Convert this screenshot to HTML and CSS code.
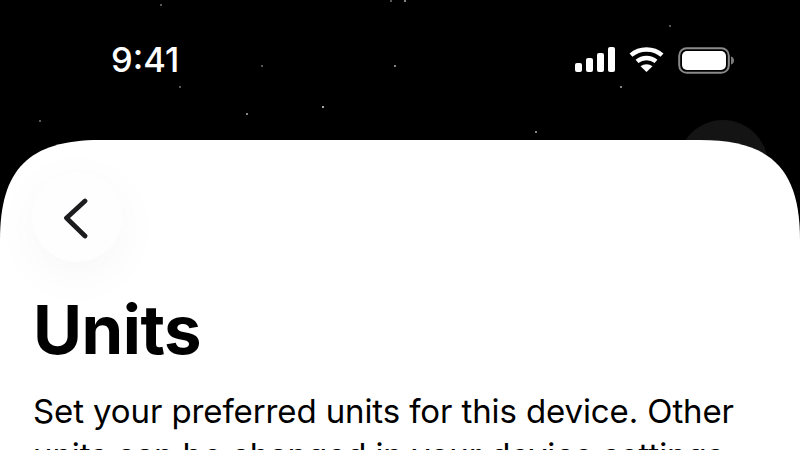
FILE: index.html
```html
<!DOCTYPE html>
<html lang="en">
<head>
<meta charset="utf-8">
<title>Units</title>
<link rel="stylesheet" href="styles.css">
</head>
<body>
<div class="screen">
  <div class="stars" aria-hidden="true">
    <i class="star dim" style="left:160px;top:4px"></i>
    <i class="star dim" style="left:261px;top:65px"></i>
    <i class="star" style="left:394px;top:65px"></i>
    <i class="star dim" style="left:179px;top:86px"></i>
    <i class="star dim" style="left:39px;top:120px"></i>
    <i class="star" style="left:246px;top:113px"></i>
    <i class="star bright" style="left:322px;top:106px"></i>
    <i class="star dim" style="left:390px;top:0"></i>
    <i class="star" style="left:404px;top:0"></i>
    <i class="star dim" style="left:669px;top:25px"></i>
    <i class="star" style="left:620px;top:86px"></i>
    <i class="star" style="left:535px;top:131px"></i>
  </div>
  <div class="ghost-button"></div>

  <header class="status-bar">
    <span class="time">9:41</span>
    <div class="status-icons">
      <svg class="signal" width="40" height="25" viewBox="0 0 40 25" fill="#fff">
        <rect x="0" y="16" width="7" height="9" rx="2"/>
        <rect x="11" y="11" width="7" height="14" rx="2"/>
        <rect x="22" y="6" width="7" height="19" rx="2"/>
        <rect x="33" y="0" width="7" height="25" rx="2"/>
      </svg>
      <svg class="wifi" width="35" height="25" viewBox="0 0 35 25" fill="none" stroke="#fff" stroke-width="4.4">
        <path d="M2 8.2C10.5 0.6 24.5 0.6 33 8.2"/>
        <path d="M8 14.4C13.5 9.8 21.5 9.8 27 14.4"/>
        <path d="M17.500 25L11.500 19.300C15 16.600 20 16.600 23.500 19.300Z" fill="#fff" stroke="none"/>
      </svg>
      <svg class="battery" width="56" height="27" viewBox="0 0 56 27">
        <rect x="1.200" y="1.200" width="49.600" height="24.600" rx="7.500" fill="none" stroke="#8a8a8a" stroke-width="2"/>
        <rect x="4" y="4" width="44" height="19" rx="5" fill="#fff"/>
        <path d="M53 9.500C55 10 56 11.500 56 13.500C56 15.500 55 17 53 17.500Z" fill="#7a7a7a"/>
      </svg>
    </div>
  </header>

  <main class="card">
    <button class="back" aria-label="Back">
      <svg width="28" height="44" viewBox="0 0 28 44" fill="none" stroke="#1c1c1e" stroke-width="4.800" stroke-linecap="round" stroke-linejoin="round">
        <path d="M22 6L3.500 23L22 41"/>
      </svg>
    </button>
    <h1 class="title">Units</h1>
    <p class="lead">Set your preferred units for this device. Other units can be changed in your device settings.</p>
  </main>
</div>
</body>
</html>
```

FILE: styles.css
```css
* { box-sizing: border-box; }

html, body {
  margin: 0;
  height: 100%;
  background: #000;
}

.screen {
  position: relative;
  width: 800px;
  height: 450px;
  overflow: hidden;
  background: #000;
  display: flex;
  flex-direction: column;
  font-family: Inter, "Liberation Sans", sans-serif;
}

.stars { position: absolute; inset: 0; }

.star {
  position: absolute;
  width: 2px;
  height: 2px;
  border-radius: 50%;
  background: #b0b0b0;
}
.star.dim { background: #777; }
.star.bright { background: #e0e0e0; }

.ghost-button {
  position: absolute;
  left: 678px;
  top: 120px;
  width: 90px;
  height: 90px;
  border-radius: 50%;
  background: #141414;
}

.status-bar {
  position: relative;
  height: 140px;
  flex: none;
  padding: 38px 66px 0 111px;
  display: flex;
  justify-content: space-between;
  align-items: flex-start;
  color: #fff;
}

.time {
  font-size: 34.500px;
  line-height: 44px;
  font-weight: 500;
}

.status-icons {
  display: flex;
  align-items: flex-start;
  gap: 14px;
  padding-top: 9px;
}

.status-icons svg { display: block; }

.card {
  position: relative;
  flex: none;
  height: 400px;
  background: #fff;
  clip-path: path("M0 100C0 29 29 0 100 0H700C771 0 800 29 800 100V400H0Z");
  padding: 32px 33px 0;
  color: #000;
}

.back {
  display: flex;
  align-items: center;
  justify-content: center;
  width: 90px;
  height: 90px;
  padding: 0;
  margin: 0 0 0 -1px;
  border: 0;
  border-radius: 50%;
  background: #fefefe;
  box-shadow: 0 12px 50px rgba(0, 0, 0, 0.04);
}

.title {
  margin: 26px 0 0;
  font-size: 67px;
  line-height: 84px;
  font-weight: 700;
  letter-spacing: -0.5px;
}

.lead {
  margin: 17px 0 0;
  font-size: 33px;
  line-height: 44px;
  font-weight: 400;
  letter-spacing: -0.110px;
}
```
